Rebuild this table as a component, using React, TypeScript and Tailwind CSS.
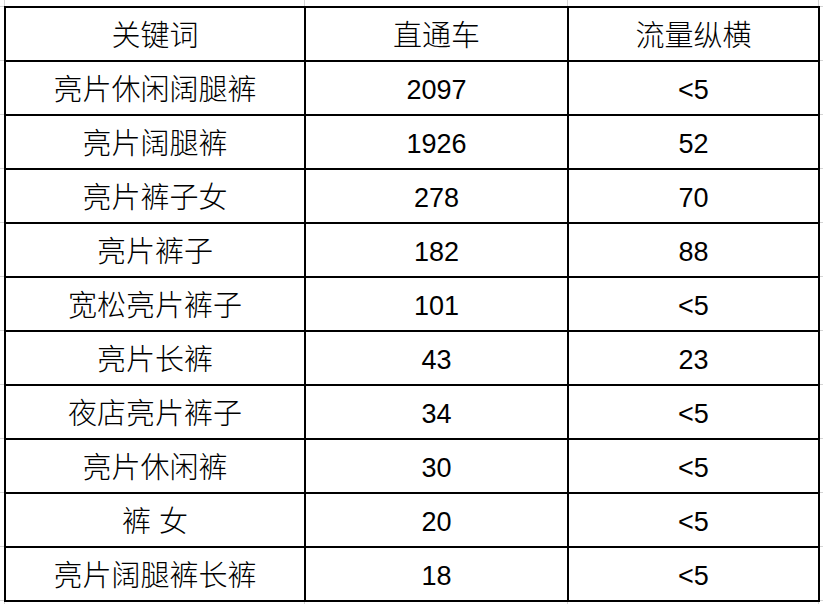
import React from 'react';

const rows: [string, string, string][] = [
  ['亮片休闲阔腿裤', '2097', '<5'],
  ['亮片阔腿裤', '1926', '52'],
  ['亮片裤子女', '278', '70'],
  ['亮片裤子', '182', '88'],
  ['宽松亮片裤子', '101', '<5'],
  ['亮片长裤', '43', '23'],
  ['夜店亮片裤子', '34', '<5'],
  ['亮片休闲裤', '30', '<5'],
  ['裤 女', '20', '<5'],
  ['亮片阔腿裤长裤', '18', '<5'],
];

const header = ['关键词', '直通车', '流量纵横'];

const VerticalTicks = ({ className }: { className: string }) => (
  <div className={`flex ${className}`}>
    <div className="w-[5px] border-r border-[#d4d4d4]" />
    <div className="w-[300px] border-r border-[#d4d4d4]" />
    <div className="w-[263px] border-r border-[#d4d4d4]" />
    <div className="w-[251px] border-r border-[#d4d4d4]" />
  </div>
);

const HorizontalTicks = ({ className }: { className: string }) => (
  <div className={`flex flex-col ${className}`}>
    {Array.from({ length: 11 }).map((_, i) => (
      <div key={i} className="h-[54px] border-t border-[#d4d4d4]" />
    ))}
    <div className="border-t border-[#d4d4d4]" />
  </div>
);

const Cell = ({ children, cjk }: { children: React.ReactNode; cjk?: boolean }) => (
  <div
    className={`h-[52px] bg-white flex items-center justify-center text-black ${
      cjk ? 'text-[29px] font-light pt-[5px]' : 'text-[27px] pt-[4px]'
    }`}
  >
    {children}
  </div>
);

export default function App() {
  return (
    <div
      className="w-[823px] h-[604px] bg-white overflow-hidden"
      style={{ fontFamily: '"Liberation Sans", "Noto Sans CJK SC", sans-serif' }}
    >
      <VerticalTicks className="h-[6px]" />
      <div className="flex">
        <HorizontalTicks className="w-[4px]" />
        <div className="border-2 border-black bg-black grid grid-cols-[298px_261px_249px] gap-[2px]">
          {header.map((h) => (
            <Cell key={h} cjk>
              {h}
            </Cell>
          ))}
          {rows.map((r, i) => (
            <React.Fragment key={i}>
              <Cell cjk>{r[0]}</Cell>
              <Cell>{r[1]}</Cell>
              <Cell>{r[2]}</Cell>
            </React.Fragment>
          ))}
        </div>
        <HorizontalTicks className="flex-1" />
      </div>
      <VerticalTicks className="h-[2px]" />
    </div>
  );
}
